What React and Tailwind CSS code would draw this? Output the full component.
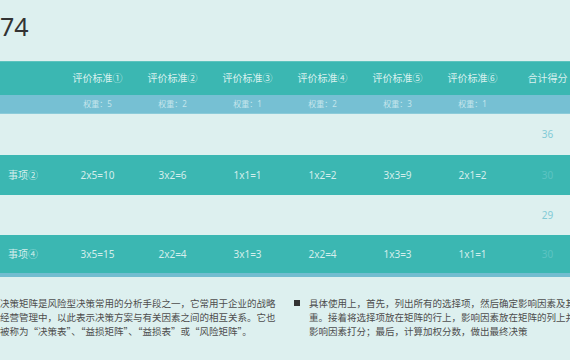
const criteria = [
  { name: "评价标准①", weight: 5 },
  { name: "评价标准②", weight: 2 },
  { name: "评价标准③", weight: 1 },
  { name: "评价标准④", weight: 2 },
  { name: "评价标准⑤", weight: 3 },
  { name: "评价标准⑥", weight: 1 },
];

const rows = [
  { label: "", cells: [], total: "36", dark: false },
  {
    label: "事项②",
    cells: ["2x5=10", "3x2=6", "1x1=1", "1x2=2", "3x3=9", "2x1=2"],
    total: "30",
    dark: true,
  },
  { label: "", cells: [], total: "29", dark: false },
  {
    label: "事项④",
    cells: ["3x5=15", "2x2=4", "3x1=3", "2x2=4", "1x3=3", "1x1=1"],
    total: "30",
    dark: true,
  },
];

const cols = "grid grid-cols-[60px_repeat(7,75px)] w-[585px]";

export default function App() {
  return (
    <div
      className="w-[570px] h-[360px] overflow-hidden bg-[#ddf0ef] flex flex-col"
      style={{ fontFamily: '"Noto Sans", "Noto Sans CJK SC", sans-serif' }}
    >
      <div className="h-[61px] shrink-0 pt-[14px] text-[25px] leading-none text-[#333]">
        74
      </div>

      <div className={`${cols} h-[34px] shrink-0 bg-[#3bb7b2] border-t border-[#5cc3be] items-center text-[10px] text-[#d9f1ef]`}>
        <div />
        {criteria.map((c) => (
          <div key={c.name} className="text-center">
            {c.name}
          </div>
        ))}
        <div className="text-center">合计得分</div>
      </div>

      <div className={`${cols} h-[19px] shrink-0 bg-[#76c0d3] border-b border-[#8ccbd9] items-center text-[8px] text-[#c4e5ec]`}>
        <div />
        {criteria.map((c) => (
          <div key={c.name} className="text-center">
            权重：{c.weight}
          </div>
        ))}
        <div />
      </div>

      {rows.map((r, i) => (
        <div
          key={i}
          className={`${cols} shrink-0 items-center text-[10px] ${
            r.dark
              ? "bg-[#3bb7b2] text-[#d3eeec]"
              : "bg-[#ddf0ef] text-[#82cbd6]"
          } ${i === 3 ? "h-[42px] border-b-4 border-[#72bdd0]" : i === 0 ? "h-[41px]" : "h-[40px]"}`}
        >
          <div className="pl-2">{r.label}</div>
          {criteria.map((c, j) => (
            <div key={c.name} className="text-center">
              {r.cells[j] || ""}
            </div>
          ))}
          <div
            className={`text-center ${
              r.dark ? "text-[#5cc4c2]" : "text-[#82cbd6]"
            }`}
          >
            {r.total}
          </div>
        </div>
      ))}

      <div
        className="flex pt-[19px] text-[9.5px] leading-[14px] text-[#4d4d4d]"
        style={{ fontFamily: '"Noto Sans CJK SC", sans-serif' }}
      >
        <div className="w-[285px] shrink-0 whitespace-nowrap">
          决策矩阵是风险型决策常用的分析手段之一，它常用于企业的战略
          <br />
          经营管理中，以此表示决策方案与有关因素之间的相互关系。它也
          <br />
          被称为“决策表”、“益损矩阵”、“益损表”或“风险矩阵”。
        </div>
        <div className="flex gap-[9px] pl-[9px] shrink-0">
          <span className="mt-[4px] w-[6px] h-[6px] bg-[#333] shrink-0" />
          <div className="whitespace-nowrap">
            具体使用上，首先，列出所有的选择项，然后确定影响因素及其权
            <br />
            重。接着将选择项放在矩阵的行上，影响因素放在矩阵的列上并对
            <br />
            影响因素打分；最后，计算加权分数，做出最终决策
          </div>
        </div>
      </div>
    </div>
  );
}
